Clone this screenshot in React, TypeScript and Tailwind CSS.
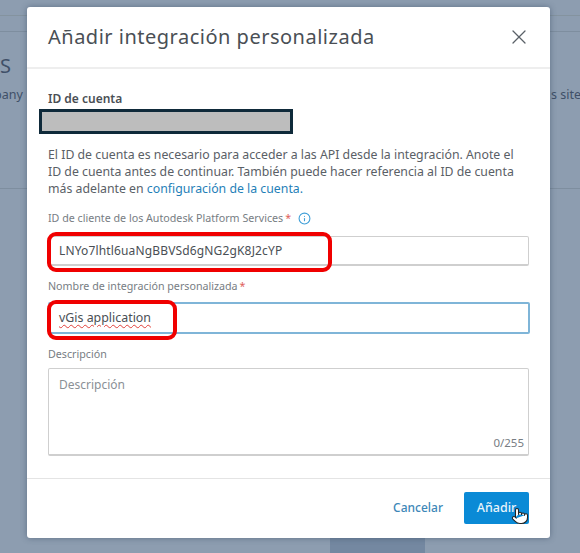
import React from 'react';
import { Info, X, Pointer } from 'lucide-react';

const App: React.FC = () => {
  return (
    <div className="relative w-[580px] h-[553px] overflow-hidden bg-[#8d9db0] font-['Noto_Sans',sans-serif] text-[#3c4650]">
      {/* page behind the dialog */}
      <div className="absolute inset-0 text-[#3f5068]">
        <div className="absolute left-0 right-0 top-[15px] h-px bg-[#84939f]" />
        <div className="absolute left-0 right-0 top-[31px] h-px bg-[#7e8e9f]" />
        <div className="absolute left-0 right-0 top-[188px] h-px bg-[#7e8e9f]" />
        <div className="absolute left-0 top-[54px] text-[20px] leading-[24px]">S</div>
        <div className="absolute left-[-6px] top-[86px] text-[12.5px] leading-[18px]">pany</div>
        <div className="absolute left-[551px] top-[86px] text-[12.5px] leading-[18px] whitespace-nowrap">s site</div>
        <div className="absolute left-[330px] top-[538px] w-[95px] h-[15px] bg-[#7488a1]" />
      </div>

      {/* dialog */}
      <div className="absolute left-[27px] top-[7px] w-[523px] h-[531px] bg-white rounded-[3px] shadow-[0_0_6px_rgba(40,60,85,0.45)] flex flex-col">
        <div className="h-[62px] shrink-0 border-b-2 border-[#eeeeee] flex items-center justify-between pl-[21px] pr-[19px]">
          <h1 className="text-[20px] tracking-[0.5px] text-[#4a4f55] font-normal whitespace-nowrap">Añadir integración personalizada</h1>
          <X size={24} strokeWidth={1.3} className="text-[#5b6168]" />
        </div>

        <div className="flex-1 px-[21px] pt-[21px] flex flex-col">
          <div className="text-[12px] leading-[17px] font-semibold text-[#4a4f55]">ID de cuenta</div>
          <div className="ml-[-9px] mt-[2px] w-[254px] h-[25px] bg-[#bdbdbd] border-[3px] border-[#0f2a3a]" />
          <p className="mt-[12px] text-[12.3px] leading-[17px] text-[#5a6066] whitespace-nowrap">
            El ID de cuenta es necesario para acceder a las API desde la integración. Anote el
            <br />
            ID de cuenta antes de continuar. También puede hacer referencia al ID de cuenta
            <br />
            más adelante en <span className="text-[#1f7fb8]">configuración de la cuenta.</span>
          </p>

          <div className="mt-[13px] flex items-center h-[17px] text-[10.7px] text-[#777d83]">
            ID de cliente de los Autodesk Platform Services
            <span className="ml-[2px] text-[#e0605a]">*</span>
            <Info size={13} className="ml-[7px] text-[#3f9fd8]" />
          </div>
          <div className="mt-[9px] w-[481px] h-[30px] border border-[#cfcfcf] border-b-2 rounded-[2px] pl-[10px] flex items-center text-[12px] tracking-[0.15px] text-[#4a4f55]">
            LNYo7lhtl6uaNgBBVSd6gNG2gK8J2cYP
          </div>

          <div className="mt-[12px] flex items-center h-[17px] text-[10.7px] text-[#777d83]">
            Nombre de integración personalizada
            <span className="ml-[2px] text-[#e0605a]">*</span>
          </div>
          <div className="mt-[7px] w-[482px] h-[32px] border-2 border-[#7fb5d8] rounded-[2px] pl-[9px] flex items-center text-[12.4px] text-[#4a4f55]">
            <span className="underline decoration-wavy decoration-[#e0403a] decoration-1 underline-offset-2">vGis application</span>
          </div>

          <div className="mt-[12px] h-[17px] flex items-center text-[10.7px] text-[#777d83]">Descripción</div>
          <div className="relative mt-[5px] w-[481px] h-[88px] border border-[#cfcfcf] border-b-2 rounded-[2px] pl-[10px] pt-[7px] text-[12px] text-[#8b9096]">
            Descripción
            <span className="absolute right-[4px] bottom-[3px] text-[11.5px] text-[#777d83]">0/255</span>
          </div>
        </div>

        <div className="h-[60px] shrink-0 border-t border-[#e4e4e4] flex items-center justify-end gap-[21px] pr-[21px] pb-[1px]">
          <span className="text-[12px] font-medium text-[#3d87b8]">Cancelar</span>
          <span className="w-[65px] h-[32px] rounded-[2px] bg-[#0a8ad6] flex items-center justify-center text-[12.5px] font-medium text-[#e8f4fb]">Añadir</span>
        </div>
      </div>

      {/* red annotation boxes from the screenshot */}
      <div className="absolute left-[47px] top-[232px] w-[285px] h-[40px] border-[4px] border-[#f00000] rounded-[9px]" />
      <div className="absolute left-[47px] top-[300px] w-[130px] h-[40px] border-[4px] border-[#f00000] rounded-[9px]" />

      {/* mouse pointer */}
      <Pointer size={18} strokeWidth={1.4} className="absolute left-[511px] top-[507px] fill-white text-[#222222]" />
    </div>
  );
};

export default App;
